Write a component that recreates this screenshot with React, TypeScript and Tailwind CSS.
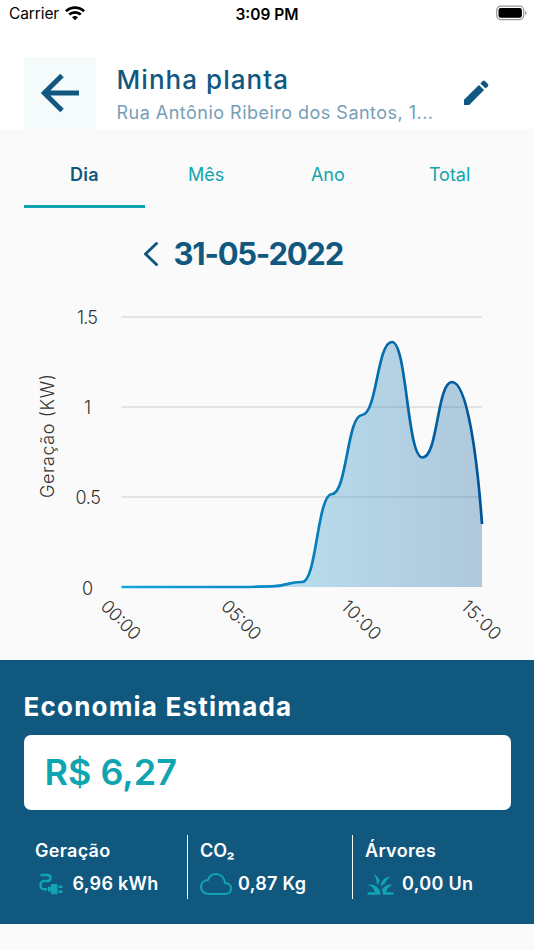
import { IoCloudOutline } from "react-icons/io5";
import { MdGrass } from "react-icons/md";

const CURVE =
  "M121.5 587H242C257 587 257 586.4 272 586.3S287 582 302 582S317 494.5 332 494S347 415.5 362 415S377 342 392 342S407 457.5 422.5 457.5S437 382 452 382C467 382 477 455 482 524";

const yTicks = [
  { label: "1.5", y: 317, x: 77, w: 21 },
  { label: "1", y: 407, x: 84, w: 7 },
  { label: "0.5", y: 497, x: 75.5, w: 25.5 },
];

const xTicks = [
  { label: "00:00", x: 121.5 },
  { label: "05:00", x: 242 },
  { label: "10:00", x: 362 },
  { label: "15:00", x: 482 },
];

const tabs = ["Dia", "Mês", "Ano", "Total"];

function StatusBar() {
  return (
    <div className="grid h-[28px] grid-cols-3 items-center pl-[9px] pr-[7px] text-black">
      <div className="flex items-center gap-[6px]">
        <span className="text-[15.5px] tracking-[-0.1px]">Carrier</span>
        <svg className="-mt-[2px]" width="20" height="15" viewBox="0 0 20 15" fill="none" stroke="#000" strokeWidth="2.7">
          <path d="M1 5.2C6 .3 14 .3 19 5.2" />
          <path d="M4.2 8.6C7.5 5.5 12.5 5.5 15.8 8.6" />
          <path d="M7 11.2C8.8 9.5 11.2 9.5 13 11.2L10 14.2Z" fill="#000" stroke="none" />
        </svg>
      </div>
      <span className="-ml-[2px] pt-px text-center text-[15.5px] font-semibold">3:09 PM</span>
      <svg className="-mt-[2px] justify-self-end" width="31" height="16" viewBox="0 0 31 16">
        <rect x=".7" y="1.2" width="27" height="13.4" rx="4" fill="none" stroke="#999" strokeWidth="1.2" />
        <rect x="2.5" y="3" width="23.4" height="9.8" rx="2.2" fill="#000" />
        <path d="M29.3 5.7Q32 8 29.3 10.3Z" fill="#888" />
      </svg>
    </div>
  );
}

function Header() {
  return (
    <header className="mt-[29px] flex h-[72px] pl-[23.5px] text-[#10587f]">
      <div className="flex size-[72px] items-center justify-center bg-[#f5fafb]">
        <svg width="40" height="40" viewBox="0 0 40 40" fill="none" stroke="currentColor" strokeWidth="5">
          <path d="M39 20H4M22 2.5L4.3 20L22 37.5" />
        </svg>
      </div>
      <div className="ml-[21px] w-[330px] whitespace-nowrap">
        <h1 className="mt-[6px] text-[26px] font-medium leading-[34px] tracking-[1.05px]">Minha planta</h1>
        <p className="mt-[3px] text-[18px] leading-[25px] tracking-[0.48px] text-[#769eb7]">
          Rua Antônio Ribeiro dos Santos, 1...
        </p>
      </div>
      <svg className="ml-[13px] mt-[20px]" width="32" height="32" viewBox="0 0 32 32" fill="currentColor">
        <path d="M4 28V22.8L18.9 7.9L24.1 13.1L9.2 28Z" />
        <path d="M20.4 6.4L22.7 4.1Q23.8 3.1 24.9 4.1L27.9 7.1Q28.9 8.2 27.9 9.3L25.6 11.6Z" />
      </svg>
    </header>
  );
}

function Chart() {
  return (
    <svg className="block" width="534" height="374.5" viewBox="0 285 534 374.5" fill="#333" fontSize="18" fontWeight="300">
      <defs>
        <linearGradient id="power" gradientUnits="userSpaceOnUse" x1="121" x2="482" y1="0" y2="0">
          <stop offset="0" stopColor="#14a5df" />
          <stop offset=".5" stopColor="#0882be" />
          <stop offset="1" stopColor="#005398" />
        </linearGradient>
        <linearGradient id="area" gradientUnits="userSpaceOnUse" x1="300" x2="482" y1="0" y2="0">
          <stop offset="0" stopColor="#1b94c9" />
          <stop offset="1" stopColor="#005398" />
        </linearGradient>
      </defs>
      {yTicks.map((t) => (
        <g key={t.label}>
          <path d={`M121.5 ${t.y}H482`} stroke="#dcdddd" strokeWidth="1.5" />
          <text x={t.x} y={t.y + 7} textLength={t.w}>{t.label}</text>
        </g>
      ))}
      <text x="82" y="595" textLength="12">0</text>
      <text transform="translate(53.5 498) rotate(-90)" textLength="124">Geração (KW)</text>
      <path d={`${CURVE}V587Z`} fill="url(#area)" opacity=".3" />
      <path d={CURVE} fill="none" stroke="url(#power)" strokeWidth="2.7" />
      {xTicks.map((t) => (
        <text key={t.label} transform={`translate(${t.x - 22} 607.5) rotate(45)`} textLength="48">
          {t.label}
        </text>
      ))}
    </svg>
  );
}

function PlugIcon() {
  return (
    <svg width="24" height="22" viewBox="0 0 24 22" fill="none" stroke="#0fa5b3" strokeWidth="2.4">
      <path d="M1.5 2H8.5C12.5 2 12.5 8 8.5 8H5C.3 8 .3 16.3 5 16.3H8" />
      <path d="M9 13.8H12V11H18.5V21.2H12V18.5H9Z" fill="#0fa5b3" stroke="none" />
      <path d="M19.5 13.7H23.5M19.5 18.7H23.5" />
    </svg>
  );
}

function Savings() {
  return (
    <section className="h-[264.5px] bg-[#11587f] px-[23.5px] pt-[29px] text-white">
      <h2 className="whitespace-nowrap text-[26px] font-bold leading-[36px] tracking-[1.2px]">Economia Estimada</h2>
      <div className="mt-[10px] flex h-[75px] items-center rounded-[7px] bg-white pl-[21px] text-[36px] font-semibold text-[#0fa5b0]">
        <span>R$ 6,27</span>
      </div>
      <div className="mt-[25px] flex h-[64px] text-[18px] font-semibold leading-[24px] tracking-[0.3px]">
        <div className="w-[163px] pl-[11.5px] pt-[4.5px]">
          <p>Geração</p>
          <div className="mt-[9px] flex items-center">
            <span className="ml-[4px] w-[33.5px]"><PlugIcon /></span>
            <span>6,96 kWh</span>
          </div>
        </div>
        <div className="w-[165px] border-l-[1.5px] border-white pl-[12.5px] pt-[4.5px]">
          <p className="tracking-normal">CO₂</p>
          <div className="mt-[9px] flex items-center">
            <IoCloudOutline className="-my-1 mr-[6px] size-[32px] text-[#0fa5b3]" />
            <span>0,87 Kg</span>
          </div>
        </div>
        <div className="border-l-[1.5px] border-white pl-[12.5px] pt-[4.5px]">
          <p>Árvores</p>
          <div className="mt-[9px] flex items-center">
            <MdGrass className="-my-1 mr-[6px] size-[31px] text-[#0fa5b3]" />
            <span>0,00 Un</span>
          </div>
        </div>
      </div>
    </section>
  );
}

export default function App() {
  return (
    <main className="h-[950px] w-[534px] overflow-hidden bg-[#fafafa] font-['Inter',sans-serif]">
      <div className="h-[129px] bg-white">
        <StatusBar />
        <Header />
      </div>
      <nav className="mx-[23.5px] flex h-[79px] text-[18px]">
        {tabs.map((tab, i) => (
          <div
            key={tab}
            className={
              i === 0
                ? "flex flex-1 justify-center border-b-[3px] border-[#10a3b1] pt-[32px] font-semibold tracking-[0.2px] text-[#11587f]"
                : "flex flex-1 justify-center pt-[32px] text-[#12a5ae]"
            }
          >
            {tab}
          </div>
        ))}
      </nav>
      <div className="flex h-[77px] items-center pl-[143px] pt-[15px] text-[#11587f]">
        <svg width="17" height="26" viewBox="0 0 17 26" fill="none" stroke="currentColor" strokeWidth="3" strokeLinecap="round" strokeLinejoin="round">
          <path d="M13.5 2.5L2.5 13L13.5 23.5" />
        </svg>
        <span className="ml-[13.5px] text-[31px] font-bold tracking-[-1.25px]">31-05-2022</span>
      </div>
      <Chart />
      <Savings />
    </main>
  );
}
